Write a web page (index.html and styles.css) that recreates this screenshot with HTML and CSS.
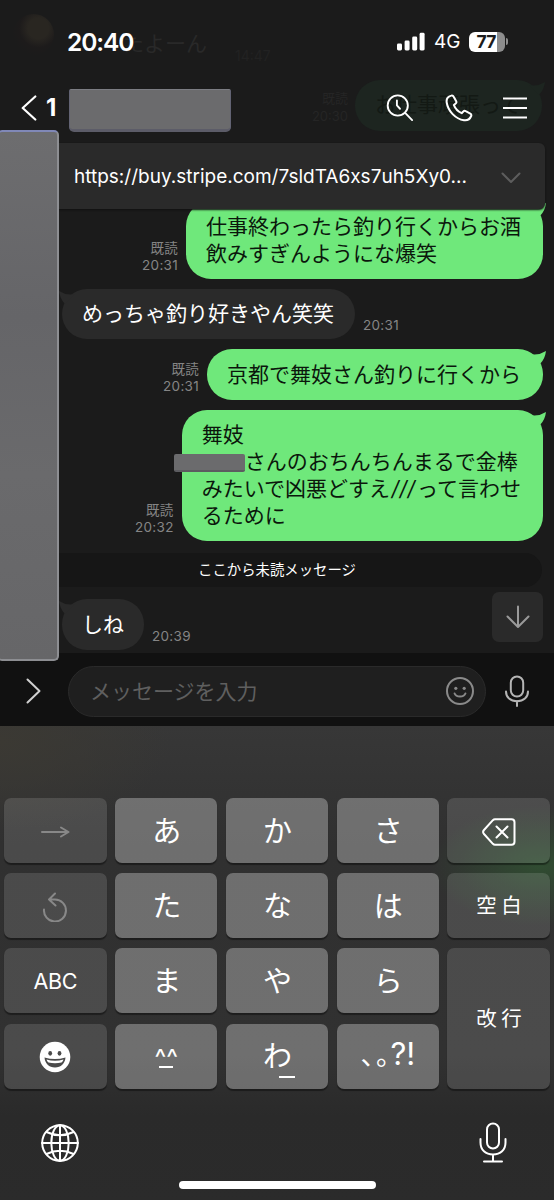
FILE: index.html
```html
<!DOCTYPE html>
<html lang="ja">
<head>
<meta charset="utf-8">
<title>トーク</title>
<link rel="stylesheet" href="styles.css">
</head>
<body>
<div class="phone">
  <div class="faded" aria-hidden="true">
    <div class="faded-avatar"></div>
    <div class="faded-name">たよーん</div>
    <div class="faded-time">14:47</div>
    <div class="faded-meta">既読<br>20:30</div>
    <div class="faded-bubble">お仕事頑張って<svg class="tail" viewBox="0 0 20 18"><path d="M2 4 Q10 6 18 1 Q17 9 12 14Z"/></svg></div>
  </div>

  <header class="top">
    <div class="status">
      <span class="clock">20:40</span>
      <div class="status-right">
        <svg class="signal" width="28" height="19" viewBox="0 0 28 19"><rect x="0" y="11.500" width="5" height="7" rx="1.400"/><rect x="7.600" y="8.500" width="5" height="10" rx="1.400"/><rect x="15.200" y="4.500" width="5" height="14" rx="1.400"/><rect x="22.600" y="0.800" width="5" height="17.700" rx="1.400"/></svg>
        <span class="network">4G</span>
        <span class="battery"><span class="level">77</span></span><span class="battery-cap"></span>
      </div>
    </div>
    <div class="nav">
      <svg class="back" width="16" height="26" viewBox="0 0 16 26"><path d="M14.300 1.500 1.700 13l12.600 11.500"/></svg>
      <span class="badge">1</span>
      <span class="title-mask"></span>
      <div class="actions">
        <svg width="28" height="28" viewBox="0 0 30 30"><circle cx="12.600" cy="12.300" r="10.800"/><path d="M20.500 20.300 28 28M11.700 7v5.300l3.300 3.500"/></svg>
        <svg width="28" height="28" viewBox="0 0 28 28"><path d="M6.200 1.600C3 2.400 1.200 5 1.700 8.500 3 17 10.500 25 19 26.200c3.500.5 6-1.300 7.200-4.200.4-1-.1-1.800-.9-2.300l-4.600-2.600c-.8-.5-1.800-.3-2.400.4l-1.600 1.700c-3.600-1.600-6.300-4.400-7.800-8.100l1.800-1.500c.7-.6.9-1.500.5-2.300L8.700 2.700c-.5-1-1.500-1.400-2.500-1.100Z"/></svg>
        <svg width="24" height="26" viewBox="0 0 24 26"><path d="M.5 3.500h23M.5 13h23M.5 22.500h23"/></svg>
      </div>
    </div>
  </header>

  <main class="chat">
    <div class="notice">
      <span class="link">https://buy.stripe.com/7sldTA6xs7uh5Xy0...</span>
      <svg width="20" height="12" viewBox="0 0 20 12"><path d="M1.500 1.500 10 10l8.500-8.500"/></svg>
    </div>

    <div class="row out">
      <div class="meta">既読<br>20:31</div>
      <div class="bubble">仕事終わったら釣り行くからお酒<br>飲みすぎんようにな爆笑<svg class="tail" viewBox="0 0 20 18"><path d="M2 4 Q10 6 18 1 Q17 9 12 14Z"/></svg></div>
    </div>
    <div class="row in">
      <div class="bubble">めっちゃ釣り好きやん笑笑<svg class="tail" viewBox="0 0 20 18"><path d="M18 4 Q10 6 2 1 Q3 9 8 14Z"/></svg></div>
      <div class="meta">20:31</div>
    </div>
    <div class="row out">
      <div class="meta">既読<br>20:31</div>
      <div class="bubble">京都で舞妓さん釣りに行くから<svg class="tail" viewBox="0 0 20 18"><path d="M2 4 Q10 6 18 1 Q17 9 12 14Z"/></svg></div>
    </div>
    <div class="row out">
      <div class="meta">既読<br>20:32</div>
      <div class="bubble">舞妓<br><span class="masked"></span>さんのおちんちんまるで金棒<br>みたいで凶悪どすえ<span class="slashes">///</span>って言わせ<br>るために<svg class="tail" viewBox="0 0 20 18"><path d="M2 4 Q10 6 18 1 Q17 9 12 14Z"/></svg></div>
    </div>
    <div class="unread">ここから未読メッセージ</div>
    <div class="row in last">
      <div class="bubble">しね<svg class="tail" viewBox="0 0 20 18"><path d="M18 4 Q10 6 2 1 Q3 9 8 14Z"/></svg></div>
      <div class="meta">20:39</div>
    </div>
    <div class="jump"><svg width="24" height="24" viewBox="0 0 24 24"><path d="M12 1.500v20M1.500 11.500 12 22l10.500-10.500"/></svg></div>
  </main>
  <div class="side-mask"></div>

  <div class="composer">
    <svg class="expand" width="16" height="26" viewBox="0 0 16 26"><path d="M1.500 1.500 13.500 13 1.500 24.500"/></svg>
    <div class="field">
      <span>メッセージを入力</span>
      <svg width="28" height="28" viewBox="0 0 28 28"><circle cx="14" cy="14" r="13"/><path d="M8.600 16.500c1.500 4 9.300 4 10.800 0"/><g class="eyes"><circle cx="9.800" cy="11.300" r="1.600"/><circle cx="18.200" cy="11.300" r="1.600"/></g></svg>
    </div>
    <svg class="mic" width="24" height="32" viewBox="0 0 24 32"><rect x="5.800" y="1.500" width="12.400" height="20" rx="6.200"/><path d="M1 16.500c0 6 4.500 9.700 11 9.700s11-3.700 11-9.700M12 26v5"/></svg>
  </div>

  <section class="keyboard">
    <div class="keys">
      <div class="key dark dim"><svg width="29" height="12" viewBox="0 0 29 12"><path d="M1 6h26M20 1.500 27.500 6 20 10.500"/></svg></div>
      <div class="key">あ</div><div class="key">か</div><div class="key">さ</div>
      <div class="key dark"><svg width="34" height="28" viewBox="0 0 34 28"><path d="M13 1.300h16.500a3 3 0 0 1 3 3v19.400a3 3 0 0 1-3 3H13a3 3 0 0 1-2.100-.9L2 16a3 3 0 0 1 0-4l8.900-9.800a3 3 0 0 1 2.100-.9ZM14.500 8.500l11 11M25.500 8.500l-11 11"/></svg></div>
      <div class="key dark dim"><svg width="26" height="30" viewBox="0 0 26 30"><path d="M2 17.500A11 11 0 1 0 13 7.500H7M13 1.500 7 7.500l6.500 6"/></svg></div>
      <div class="key">た</div><div class="key">な</div><div class="key">は</div>
      <div class="key dark word">空白</div>
      <div class="key dark latin">ABC</div>
      <div class="key">ま</div><div class="key">や</div><div class="key">ら</div>
      <div class="key dark word tall">改行</div>
      <div class="key dark"><svg class="smile" width="32" height="32" viewBox="0 0 32 32"><circle class="face" cx="16" cy="16" r="15.300"/><ellipse class="hole" cx="11.200" cy="12.300" rx="1.900" ry="2.400"/><ellipse class="hole" cx="20.500" cy="12.300" rx="1.900" ry="2.400"/><path class="hole" d="M5.500 16.500q10.500 3 21 0c-.5 6-4.500 10-10.500 10s-10-4-10.500-10Z"/><path class="face" d="M7.500 18.500q8.500 2.500 17 0-.5 2-2 3-6.500 1.300-13 0-1.500-1-2-3Z"/></svg></div>
      <div class="key kaomoji"><span class="carets">^^</span><span class="bar"></span></div>
      <div class="key wa">わ<span class="bar"></span></div>
      <div class="key punct"><span>、。</span><b>?!</b></div>
    </div>
    <div class="dock">
      <svg class="globe" width="38" height="38" viewBox="0 0 38 38"><circle cx="19" cy="19" r="17.800"/><ellipse cx="19" cy="19" rx="8.700" ry="17.800"/><path d="M19 1v36M1 19h36M5.500 8q13.500 6.500 27 0M5.500 30q13.500-6.500 27 0"/></svg>
      <svg class="dictate" width="28" height="42" viewBox="0 0 28 42"><rect x="8" y="1.500" width="12" height="25" rx="6"/><path d="M1.500 17v3.500c0 7.500 5 12 12.500 12s12.500-4.500 12.500-12V17M14 32.500V39M5 39.500h18"/></svg>
    </div>
    <div class="home"></div>
  </section>
</div>
</body>
</html>
```
FILE: styles.css
```css
* { box-sizing: border-box; }
body { margin: 0; background: #1b1b1b; }
svg { display: block; flex: none; fill: none; stroke: #fff; stroke-width: 2; stroke-linecap: round; stroke-linejoin: round; }

.phone {
  position: relative;
  width: 554px;
  height: 1200px;
  overflow: hidden;
  display: flex;
  flex-direction: column;
  background: #1b1b1b;
  color: #fff;
  font-family: Inter, "Noto Sans CJK JP", sans-serif;
}

/* messages scrolled under the translucent header */
.faded { position: absolute; inset: 0 0 auto 0; height: 143px; font-size: 21px; color: #292929; }
.faded > * { position: absolute; }
.faded-avatar { left: 13px; top: 14px; width: 41px; height: 41px; border-radius: 50%; background: radial-gradient(circle at 62% 35%, #292621 0 28%, #1d1b1b 52%, #1b1b1b 75%); }
.faded-name { left: 123px; top: 30px; line-height: 28px; }
.faded-time { left: 235px; top: 47px; font-size: 14px; color: #222; }
.faded-meta { right: 206px; top: 90px; font-size: 13px; line-height: 17.500px; text-align: right; color: #252525; }
.faded-bubble { left: 355px; top: 80px; width: 187px; height: 51px; padding: 11px 20px; border-radius: 25px; line-height: 27px; background: #1d2520; color: #131914; white-space: nowrap; }

.top { position: relative; height: 143px; flex: none; }
.status { height: 83px; display: flex; justify-content: space-between; align-items: center; padding: 0 46px 0 67px; }
.clock { font-size: 24.500px; font-weight: 600; letter-spacing: -1.050px; }
.status-right { display: flex; align-items: center; }
.signal rect { fill: #fff; stroke: none; }
.network { margin-left: 9px; width: 35px; font-size: 19px; font-weight: 400; }
.battery { width: 36px; height: 20px; border-radius: 6px; background: linear-gradient(90deg, #fff 28px, #8d8d8d 28px); display: flex; align-items: center; }
.level { width: 34px; text-align: center; font-size: 17.500px; font-weight: 700; color: #1b1b1b; letter-spacing: -.8px; }
.battery-cap { width: 2px; height: 7px; margin-left: 1px; border-radius: 0 3px 3px 0; background: #8d8d8d; }

.nav { height: 49px; display: flex; align-items: center; padding: 0 27px 0 21px; }
.back { stroke-width: 2.200; }
.badge { width: 32px; padding-left: 9px; font-size: 24px; font-weight: 700; }
.title-mask { width: 162px; height: 43px; margin-top: 5px; border-radius: 2px 2px 5px 5px; background: #6b6b6d; border: 1px solid #626373; border-top-color: #7c7d83; border-bottom: 3px solid #5c5c68; }
.actions { flex: 1; display: flex; justify-content: flex-end; align-items: center; gap: 30.500px; }

.chat { position: relative; height: 510px; flex: none; padding: 58px 11px 0 62px; font-size: 21px; line-height: 27px; }
.notice { position: absolute; z-index: 2; left: 0; top: 0; width: 545px; height: 66px; padding: 0 24px 0 74px; display: flex; align-items: center; justify-content: space-between; background: #2a2a2a; border-radius: 0 6px 6px 0; box-shadow: 0 1px 2px #111; }
.notice svg { stroke: #5d5d5d; margin-top: 3px; }
.link { font-size: 19px; white-space: nowrap; padding-top: 1px; }

.row { display: flex; align-items: flex-end; gap: 8px; margin-bottom: 10px; }
.out { justify-content: flex-end; }
.bubble { position: relative; padding: 11.500px 21px 12px 20px; border-radius: 25px; white-space: nowrap; background: #2a2a2a; }
.out .bubble { padding-right: 22px; background: #6fe87b; color: #0b170c; }
.last .bubble { padding-right: 20px; }
.tail { position: absolute; right: -5px; top: 1px; width: 20px; height: 18px; stroke: none; fill: #6fe87b; }
.faded-bubble .tail { fill: #1d2520; }
.in .tail { left: -5px; right: auto; fill: #2a2a2a; }
.meta { font-size: 13.500px; line-height: 17px; letter-spacing: .3px; color: #858585; text-align: right; padding-bottom: 5px; }
.masked { display: inline-block; width: 71px; height: 18px; margin-left: -28px; vertical-align: -3px; border-radius: 2px; background: #6b6b6d; border-bottom: 2px solid #5c5c60; line-height: 18px; }
.slashes { display: inline-block; width: 27px; text-align: center; font-style: italic; line-height: 1; letter-spacing: .5px; }
.unread { margin: 12px 1px 12px -62px; height: 34px; padding-left: 12px; border-radius: 0 17px 17px 0; background: #161616; text-align: center; font-size: 14.400px; line-height: 34px; }
.jump { position: absolute; right: 11px; top: 449px; width: 51px; height: 50px; border-radius: 7px; background: #2a2a2a; display: grid; place-items: center; }
.jump svg { stroke: #9a9a9a; }
.side-mask { position: absolute; z-index: 3; left: -3px; top: 130px; width: 62px; height: 531px; border-radius: 5px; background: linear-gradient(#6d6d6f, #656568 35%, #6a6a6c 65%, #666668); border: 2px solid #8d8e92; border-top-color: #8088b8; }

.composer { height: 73px; flex: none; display: flex; align-items: center; padding: 3px 25px 0 26px; background: #111; }
.expand { stroke: #d0d0d0; }
.field { width: 418px; height: 51px; margin: 0 19px 0 26px; padding: 0 11px 0 21px; display: flex; align-items: center; justify-content: space-between; border: 1px solid #2a2a2a; border-radius: 26px; background: #1f1f1f; color: #5f5f5f; font-size: 21px; }
.field span { padding-bottom: 3px; }
.field svg { stroke: #8a8a8a; }
.field .eyes { fill: #8a8a8a; stroke: none; }
.mic { stroke: #b5b5b5; }

.keyboard {
  position: relative;
  height: 474px;
  padding: 72px 4px 0;
  background:
    radial-gradient(ellipse 110px 60px at 540px 140px, rgba(48, 88, 50, .7), transparent),
    radial-gradient(ellipse 170px 90px at 0 15px, #3b3933, transparent),
    linear-gradient(#373737, #303030 120px, #313131 330px, #2a2a2a 390px, #2b2b2b);
}
.keys { display: grid; grid-template-columns: repeat(5, 1fr); grid-template-rows: repeat(4, 65px); gap: 10.200px 8.200px; }
.key { position: relative; display: flex; align-items: center; justify-content: center; border-radius: 7px; background: rgba(255, 255, 255, .3); box-shadow: 0 1.500px 1px rgba(0, 0, 0, .4); font-size: 29px; padding: 0 0 4px 1px; }
.dark { background: rgba(255, 255, 255, .13); padding: 2px 0 0; }
.dim svg { stroke: #888; }
.word { font-size: 20.500px; letter-spacing: 4.500px; padding: 0 0 3px 5px; }
.tall { grid-row: 3 / 5; grid-column: 5; }
.latin { font-size: 21.500px; letter-spacing: -.3px; padding: 0; }
.smile { stroke: none; }
.face { fill: #fff; }
.hole { fill: #4a4a4a; }
.kaomoji { flex-direction: column; padding: 2px 0 0; }
.carets { font-size: 25px; line-height: 25px; height: 20px; }
.bar { width: 14px; height: 2px; background: #fff; }
.wa .bar { position: absolute; left: 53px; bottom: 11px; width: 16px; }
.punct { padding: 0 0 5px; }
.punct span { font-family: "Noto Sans CJK JP", sans-serif; font-size: 27px; font-feature-settings: "halt"; letter-spacing: 2px; }
.punct b { font-weight: 400; font-size: 31px; line-height: 36px; margin-left: -1px; }
.dock { display: flex; justify-content: space-between; align-items: center; margin-top: 32px; padding: 0 43px 0 37px; height: 44px; }
.home { position: absolute; left: 179px; bottom: 11px; width: 197px; height: 8px; border-radius: 4px; background: #fff; }
```
